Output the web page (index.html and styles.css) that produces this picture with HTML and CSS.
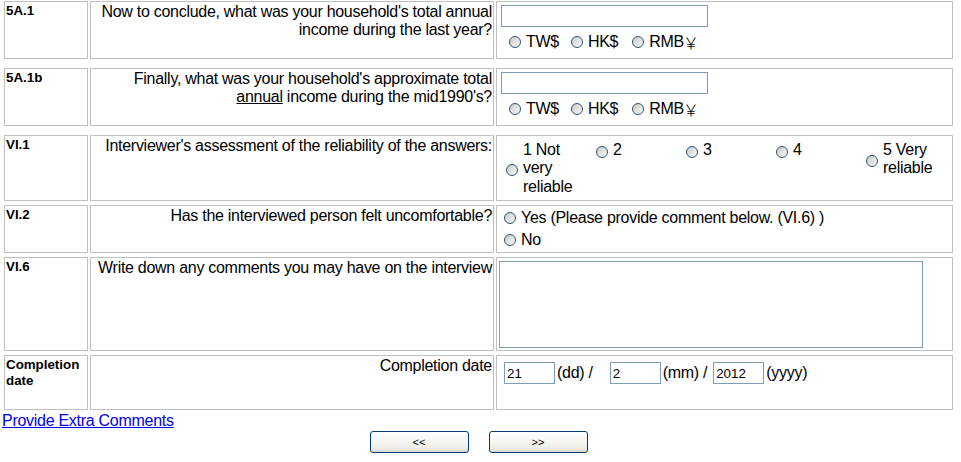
FILE: index.html
```html
<!DOCTYPE html>
<html>
<head>
<meta charset="utf-8">
<title>Interview</title>
<link rel="stylesheet" href="styles.css">
</head>
<body>
<div class="form">
  <div class="row row-income">
    <div class="cell code">5A.1</div>
    <div class="cell q">Now to conclude, what was your household's total annual income during the last year?</div>
    <div class="cell ans">
      <input type="text" class="amount">
      <div class="cur">
        <label class="opt"><input type="radio" name="c1">TW$</label>
        <label class="opt"><input type="radio" name="c1">HK$</label>
        <label class="opt opt-rmb"><input type="radio" name="c1">RMB<span class="yen">￥</span></label>
      </div>
    </div>
  </div>
  <div class="row row-income row-sep">
    <div class="cell code">5A.1b</div>
    <div class="cell q">Finally, what was your household's approximate total <u>annual</u> income during the mid1990's?</div>
    <div class="cell ans">
      <input type="text" class="amount">
      <div class="cur">
        <label class="opt"><input type="radio" name="c2">TW$</label>
        <label class="opt"><input type="radio" name="c2">HK$</label>
        <label class="opt opt-rmb"><input type="radio" name="c2">RMB<span class="yen">￥</span></label>
      </div>
    </div>
  </div>
  <div class="row row-rel row-sep">
    <div class="cell code">VI.1</div>
    <div class="cell q">Interviewer's assessment of the reliability of the answers:</div>
    <div class="cell ans">
      <div class="scale">
        <label class="sopt"><input type="radio" name="r1"><span class="slabel">1 Not very reliable</span></label>
        <label class="sopt"><input type="radio" name="r1"><span class="slabel">2</span></label>
        <label class="sopt"><input type="radio" name="r1"><span class="slabel">3</span></label>
        <label class="sopt"><input type="radio" name="r1"><span class="slabel">4</span></label>
        <label class="sopt"><input type="radio" name="r1"><span class="slabel">5 Very reliable</span></label>
      </div>
    </div>
  </div>
  <div class="row row-unc">
    <div class="cell code">VI.2</div>
    <div class="cell q">Has the interviewed person felt uncomfortable?</div>
    <div class="cell ans">
      <label class="yn"><input type="radio" name="u1">Yes (Please provide comment below. (VI.6) )</label>
      <label class="yn"><input type="radio" name="u1">No</label>
    </div>
  </div>
  <div class="row row-com">
    <div class="cell code">VI.6</div>
    <div class="cell q">Write down any comments you may have on the interview</div>
    <div class="cell ans">
      <textarea class="comments"></textarea>
    </div>
  </div>
  <div class="row row-date">
    <div class="cell code">Completion date</div>
    <div class="cell q">Completion date</div>
    <div class="cell ans">
      <div class="date">
        <input type="text" class="dpart" value="21">
        <span class="dlabel">(dd) /</span>
        <input type="text" class="dpart dpart-mm" value="2">
        <span class="dlabel">(mm) /</span>
        <input type="text" class="dpart dpart-yy" value="2012">
        <span class="dlabel">(yyyy)</span>
      </div>
    </div>
  </div>
</div>
<a class="extra" href="#">Provide Extra Comments</a>
<div class="nav">
  <button type="button" class="btn">&lt;&lt;</button>
  <button type="button" class="btn">&gt;&gt;</button>
</div>
</body>
</html>
```

FILE: styles.css
```css
* { box-sizing: border-box; }

html, body {
  margin: 0;
  background: #ffffff;
}

body {
  padding: 0 0 0 2px;
  font-family: "Liberation Sans", Arial, sans-serif;
  font-size: 16px;
  letter-spacing: -0.28px;
  color: #000000;
}

.form {
  width: 953px;
  padding: 1px 2px 0;
  display: flex;
  flex-direction: column;
  gap: 4px;
}

.row {
  display: grid;
  grid-template-columns: 84px 404px 457px;
  column-gap: 2px;
}

.row-sep { margin-top: 5px; }

.row-income { height: 58px; }
.row-rel { height: 66px; }
.row-unc { height: 48px; }
.row-com { height: 94px; }
.row-date { height: 55px; }

.cell {
  border: 1px solid #c0c0c0;
  padding: 1px;
  min-width: 0;
}

.code {
  font-weight: bold;
  font-size: 13.33px;
  line-height: 16px;
  letter-spacing: 0;
}

.q {
  text-align: right;
}

input[type="radio"] {
  appearance: none;
  -webkit-appearance: none;
  flex: none;
  width: 12px;
  height: 12px;
  margin: 0 5px 0 0;
  border: 1px solid #2c5378;
  border-radius: 50%;
  background: linear-gradient(135deg, #c9c9c5 0%, #e4e4e1 55%, #fbfbfa 100%);
}

input[type="text"], textarea {
  border: 1px solid #7f9db9;
  border-radius: 0;
  background: #ffffff;
  font-family: "Liberation Sans", Arial, sans-serif;
  font-size: 13.33px;
  letter-spacing: 0;
  color: #000000;
  outline: none;
}

.amount {
  display: block;
  width: 207px;
  height: 22px;
  margin: 2px 0 0 3px;
  padding: 1px 2px;
}

.cur {
  display: flex;
  align-items: center;
  margin-top: 6px;
  padding-left: 11px;
  gap: 12px;
}

.opt {
  display: inline-flex;
  align-items: center;
  line-height: 18px;
}

.opt-rmb { margin-left: 2px; }

.yen {
  font-family: "Noto Sans CJK SC", sans-serif;
  font-size: 16px;
  font-weight: 300;
  margin-left: -1px;
}

.scale {
  display: grid;
  grid-template-columns: repeat(5, 90px);
  margin: 4px 0 0 3px;
}

.sopt {
  display: flex;
  align-items: center;
  align-self: start;
  padding-left: 5px;
  line-height: 18.4px;
}

.sopt input[type="radio"] { margin-top: 3px; }

.slabel { max-width: 66px; }

.yn {
  display: flex;
  align-items: center;
  height: 22px;
  padding-left: 6px;
}

.comments {
  display: block;
  width: 424px;
  height: 87px;
  margin: 2px 0 0 1px;
  resize: none;
  overflow: hidden;
}

.date {
  display: flex;
  align-items: center;
  height: 22px;
  margin: 5px 0 0 6px;
}

.dpart {
  width: 51px;
  height: 22px;
  padding: 1px 2px;
}

.dpart-mm { margin-left: 17px; }
.dpart-yy { margin-left: 6px; }

.dlabel { margin-left: 2px; }

.extra {
  display: block;
  width: max-content;
  margin-top: 2px;
  color: #0000ee;
  line-height: 18px;
}

.nav {
  width: 953px;
  display: flex;
  justify-content: center;
  gap: 20px;
  margin-top: 1px;
}

.btn {
  width: 99px;
  height: 22px;
  padding: 0;
  border: 1px solid #003c74;
  border-radius: 3px;
  background: linear-gradient(to bottom, #ffffff 0%, #f7f6f2 45%, #eeede7 80%, #dcd8cc 100%);
  font-family: "Liberation Sans", Arial, sans-serif;
  font-size: 11px;
  letter-spacing: 0;
  color: #000000;
}
```
